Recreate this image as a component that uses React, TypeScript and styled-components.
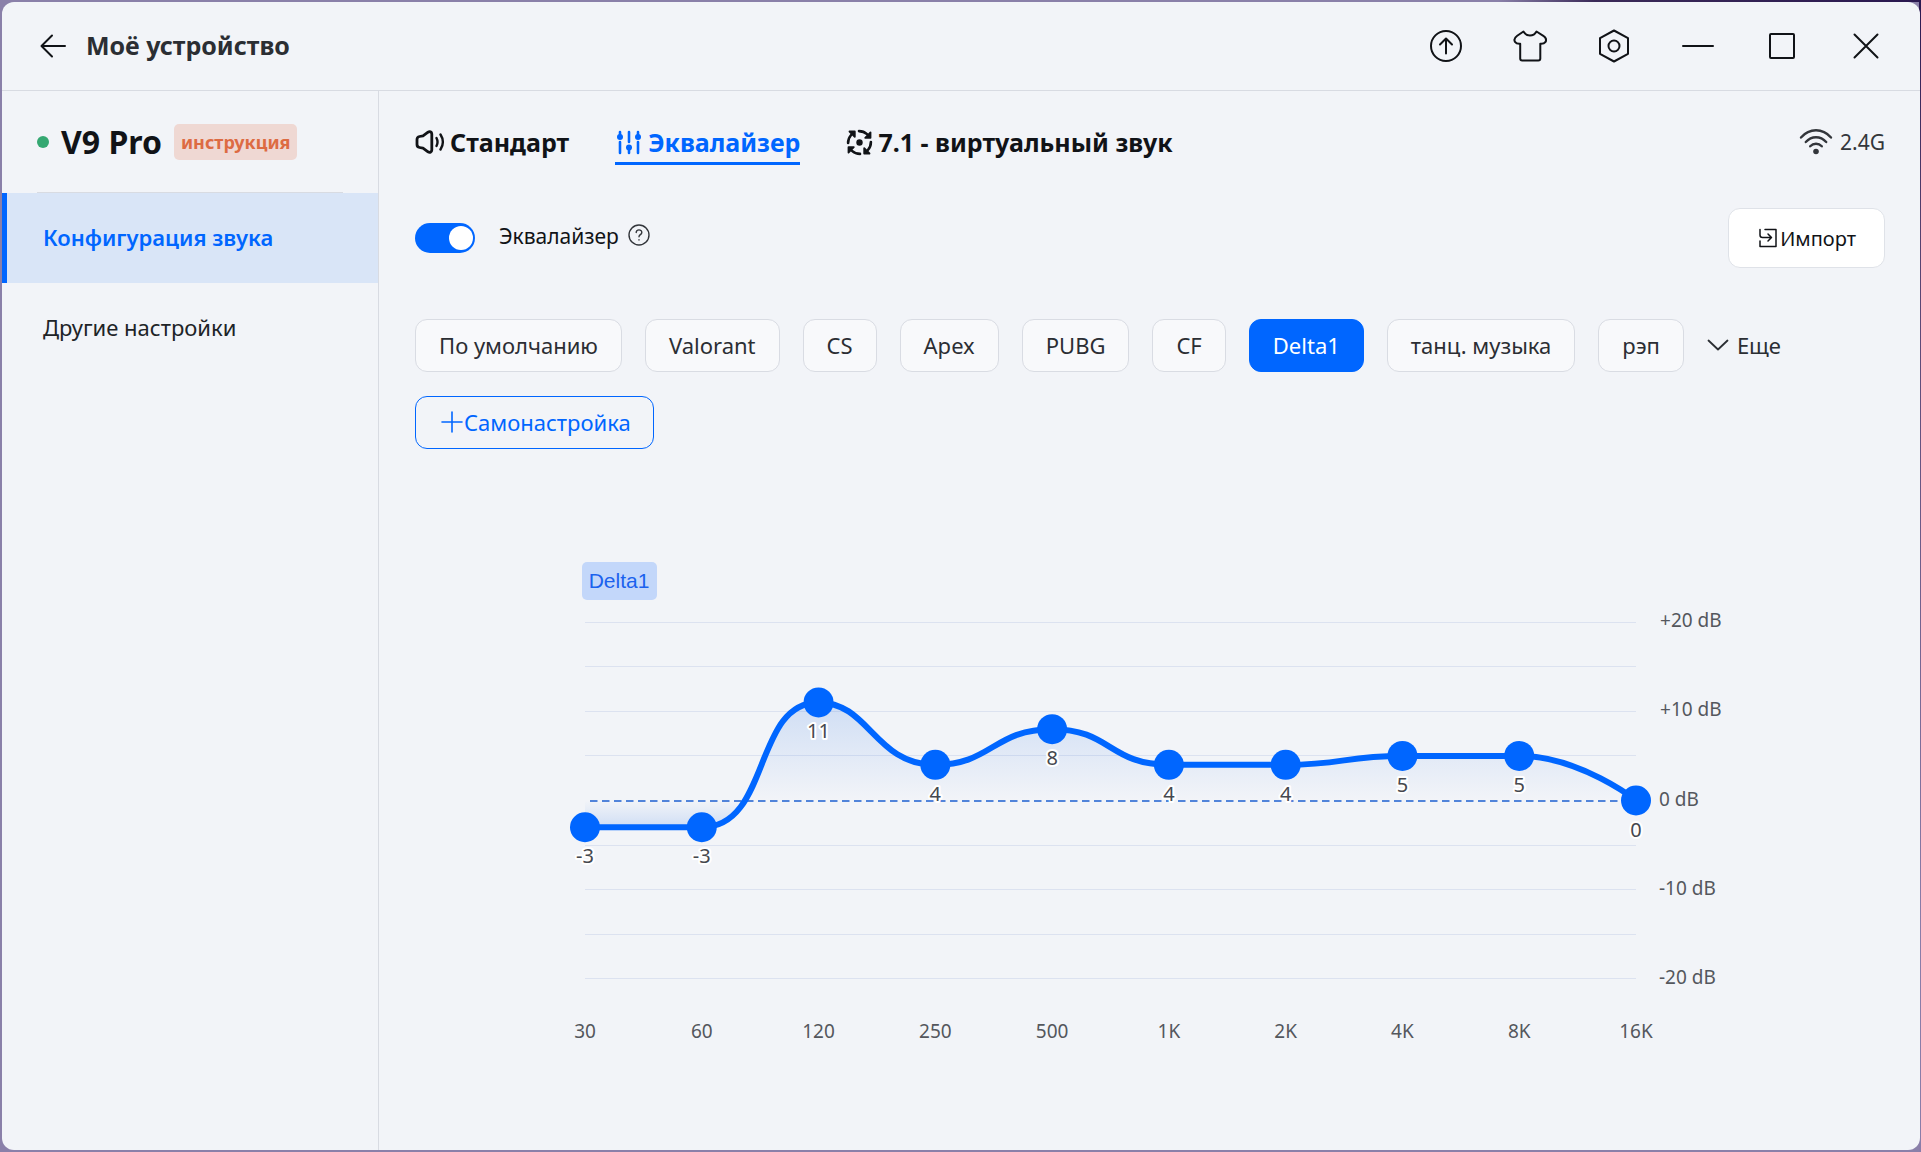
import React, { useState } from 'react';
import styled, { createGlobalStyle, css } from 'styled-components';

const blue = '#0066ff';
const ink = '#111317';
const line = '#d8dbe2';
const sans = '"Segoe UI", "Noto Sans", sans-serif';

const GlobalStyle = createGlobalStyle`
  * { box-sizing: border-box; }
  body {
    margin: 0;
    font-family: ${sans};
    color: ${ink};
    background:
      linear-gradient(90deg, transparent 78%, #3b2a58 83%, #2a1850 100%) top / 100% 2px no-repeat,
      linear-gradient(180deg, #2a1850 0%, #54406f 20%, #8a7da9 80%) right / 2px 100% no-repeat,
      #8a80a9;
  }
  button, input { font: inherit; color: inherit; }
  button { padding: 0; border: 0; background: none; cursor: pointer; }
  svg { display: block; flex: none; }
`;

const Frame = styled.div`
  padding: 2px 1px 2px 2px;
`;

const Window = styled.div`
  display: flex;
  flex-direction: column;
  min-height: calc(100vh - 4px);
  background: #f2f4f8;
  border-radius: 12px;
  overflow: hidden;
`;

const TitleBar = styled.header`
  display: flex;
  align-items: center;
  justify-content: space-between;
  height: 89px;
  padding: 0 36px;
  border-bottom: 1px solid ${line};
`;

const TitleGroup = styled.div`
  display: flex;
  align-items: center;
  gap: 18px;
`;

const Title = styled.h1`
  margin: 0;
  padding-bottom: 2px;
  font-size: 25px;
  font-weight: 700;
  line-height: 36px;
  color: #2b2e33;
`;

const WindowActions = styled.div`
  display: flex;
  gap: 48px;
`;

const IconButton = styled.button`
  display: grid;
  place-items: center;
  width: 36px;
  height: 36px;
`;

const BackButton = styled(IconButton)`
  width: 30px;
`;

const Body = styled.div`
  display: flex;
  flex: 1;
`;

const Sidebar = styled.aside`
  flex: none;
  width: 377px;
  border-right: 1px solid ${line};
`;

const Device = styled.div`
  display: flex;
  align-items: center;
  height: 102px;
  margin: 0 35px;
  border-bottom: 1px solid ${line};
`;

const StatusDot = styled.span`
  width: 12px;
  height: 12px;
  border-radius: 50%;
  background: #35a872;
`;

const DeviceName = styled.h2`
  margin: 0 12px;
  font-size: 32px;
  font-weight: 700;
  line-height: 36px;
`;

const ManualLink = styled.a`
  padding: 0 7px;
  font-size: 18px;
  font-weight: 700;
  line-height: 36px;
  color: #dd6b42;
  background: #efd8d3;
  border-radius: 5px;
  text-decoration: none;
`;

const NavItem = styled.button<{ $active?: boolean }>`
  display: block;
  width: 100%;
  height: 90px;
  padding: 0 0 2px 36px;
  border-left: 5px solid transparent;
  font-size: 22px;
  text-align: left;
  color: #202327;
  ${({ $active }) => $active && css`
    color: ${blue};
    font-weight: 600;
    background: #d9e5f7;
    border-left-color: ${blue};
  `}
`;

const Main = styled.main`
  flex: 1;
  min-width: 0;
  padding: 30px 35px 30px 36px;
`;

const SpreadRow = styled.div`
  display: flex;
  align-items: center;
  justify-content: space-between;
`;

const Tabs = styled.div`
  display: flex;
  gap: 46px;
`;

const Tab = styled.button<{ $active?: boolean }>`
  display: flex;
  align-items: center;
  gap: 5px;
  height: 44px;
  padding-bottom: 2px;
  border-top: 3px solid transparent;
  border-bottom: 3px solid ${({ $active }) => ($active ? blue : 'transparent')};
  font-size: 25px;
  font-weight: 700;
  color: ${({ $active }) => ($active ? blue : ink)};
`;

const Connection = styled.div`
  display: flex;
  align-items: center;
  gap: 7px;
  padding-bottom: 2px;
  font-size: 21px;
  color: #33363b;
`;

const EqualizerRow = styled(SpreadRow)`
  height: 60px;
  margin-top: 43px;
`;

const ToggleGroup = styled.div`
  display: flex;
  align-items: center;
  gap: 9px;
`;

const ToggleLabel = styled.label`
  display: flex;
  align-items: center;
  gap: 24px;
  font-size: 21px;
`;

const ToggleText = styled.span`
  padding-bottom: 4px;
`;

const HelpButton = styled.button`
  padding-bottom: 6px;
  color: #33363b;
`;

const Switch = styled.input`
  appearance: none;
  display: flex;
  align-items: center;
  width: 60px;
  height: 30px;
  margin: 0;
  padding: 0 2px;
  border-radius: 15px;
  background: #b9bec8;
  cursor: pointer;
  &::after {
    content: '';
    width: 24px;
    height: 24px;
    border-radius: 50%;
    background: #fff;
  }
  &:checked {
    justify-content: flex-end;
    background: ${blue};
  }
`;

const ImportButton = styled.button`
  display: flex;
  align-items: center;
  justify-content: center;
  gap: 3px;
  height: 60px;
  padding: 0 28px 0 30px;
  border: 1px solid #dfe2e8;
  border-radius: 12px;
  background: #fff;
  font-size: 20px;
`;

const Presets = styled.div`
  display: flex;
  flex-wrap: wrap;
  gap: 24px 23px;
  margin-top: 51px;
`;

const Chip = styled.button<{ $active?: boolean }>`
  height: 53px;
  padding: 0 23px 2px;
  border: 1px solid ${({ $active }) => ($active ? blue : '#d9dce3')};
  border-radius: 12px;
  font-size: 22px;
  color: ${({ $active }) => ($active ? '#fff' : '#2b2e33')};
  background: ${({ $active }) => ($active ? blue : '#f8f9fb')};
`;

const MoreButton = styled.button`
  display: flex;
  align-items: center;
  gap: 8px;
  padding-bottom: 2px;
  font-size: 22px;
  color: #2b2e33;
`;

const CustomButton = styled.button`
  display: flex;
  align-items: center;
  gap: 1px;
  height: 53px;
  padding: 0 22px 2px 25px;
  border: 1px solid ${blue};
  border-radius: 12px;
  font-size: 22px;
  color: ${blue};
`;

const ChartSvg = styled.svg`
  width: 100%;
  max-width: 1186px;
  height: auto;
  margin: 100px auto 0;
`;

const AxisText = styled.text`
  font: 19px ${sans};
  fill: #54575d;
`;

const ValueText = styled.text`
  font: 20px ${sans};
  fill: #45484e;
  stroke: #fff;
  stroke-width: 4px;
  stroke-linejoin: round;
  paint-order: stroke;
`;

const LegendText = styled.text`
  font: 21px "Liberation Sans", Arial, sans-serif;
  fill: #1b62ee;
`;

const Stroke = ({ w, h, sw = 2, children }: { w: number; h: number; sw?: number; children: React.ReactNode }) => (
  <svg width={w} height={h} viewBox={`0 0 ${w} ${h}`} fill="none" stroke="currentColor" strokeWidth={sw} strokeLinecap="round" strokeLinejoin="round" aria-hidden="true">
    {children}
  </svg>
);

const BackIcon = () => (
  <Stroke w={26} h={24}><path d="M12 1.5 1.5 12 12 22.5M1.5 12H25" /></Stroke>
);
const UploadIcon = () => (
  <Stroke w={32} h={32}><circle cx="16" cy="16" r="15" /><path d="M16 23.5V9M10 14.5 16 8.5l6 6" /></Stroke>
);
const ShirtIcon = () => (
  <Stroke w={34} h={32}>
    <path d="M10.500 1.500c1.500 2.600 3.500 4 6.500 4s5-1.400 6.500-4l6.800 4.300c2.700 1.900 3.400 4.300 2 6.300-1 1.400-2.600 1.800-5 1.600V28.500c0 1.300-.7 2-2 2H9.200c-1.300 0-2-.7-2-2V13.700c-2.400.2-4-.2-5-1.600-1.400-2-.7-4.400 2-6.300z" />
  </Stroke>
);
const HexIcon = () => (
  <Stroke w={30} h={34}><path d="M15 1.500 29 9.200v15.600L15 32.500 1 24.800V9.200z" /><circle cx="15" cy="17" r="5.500" /></Stroke>
);
const MinimizeIcon = () => <Stroke w={32} h={4}><path d="M1 2h30" /></Stroke>;
const MaximizeIcon = () => <Stroke w={28} h={28} sw={2}><rect x="2" y="2" width="24" height="24" rx="1" /></Stroke>;
const CloseIcon = () => <Stroke w={26} h={26}><path d="m1.500 1.500 23 23m0-23-23 23" /></Stroke>;

const SpeakerIcon = () => (
  <Stroke w={30} h={24} sw={2.800}>
    <path d="M2 9.500C2 7.800 3 6.800 4.500 6.500L8 5.800l5-3.600c1.700-1.100 3.800-.3 3.800 1.800v16c0 2.100-2.100 2.900-3.800 1.800l-5-3.600-3.500-.7C3 17.200 2 16.200 2 14.500z" />
    <path d="M21.500 8c1.300 2.500 1.300 5.500 0 8M25.500 4.500c3 4.700 3 10.300 0 15" strokeWidth="2.400" />
  </Stroke>
);
const SlidersIcon = () => (
  <Stroke w={28} h={26} sw={2.600}>
    <path d="M5 3v4M5 13v11M14 3v10M14 18v6M23 3v4M23 13v11" />
    <g fill="currentColor" stroke="none"><circle cx="5" cy="8" r="3" /><circle cx="14" cy="18.500" r="3" /><circle cx="23" cy="8" r="3" /></g>
  </Stroke>
);
const SurroundIcon = () => (
  <Stroke w={27} h={27} sw={2.600}>
    <circle cx="13.500" cy="13.500" r="3.200" fill="currentColor" stroke="none" />
    {[0, 90, 180, 270].map((angle) => (
      <g key={angle} transform={`rotate(${angle} 13.500 13.500)`}>
        <path d="M13 2.100c3.200 0 5.800 1 8 3" />
        <path d="M24.500 3.500v5.300h-5.300z" fill="currentColor" strokeWidth="1.800" />
      </g>
    ))}
  </Stroke>
);
const WifiIcon = () => (
  <Stroke w={34} h={28} sw={2.400}>
    <path d="M2 9.500C10.500-.1 23.500-.1 32 9.500M6.800 14c5.800-6.400 14.600-6.400 20.400 0M11.200 18.300c3.300-3.500 8.300-3.500 11.600 0" />
    <circle cx="17" cy="23.500" r="2.800" fill="currentColor" stroke="none" />
  </Stroke>
);
const HelpIcon = () => (
  <Stroke w={22} h={22} sw={1.400}>
    <circle cx="11" cy="11" r="10" />
    <path d="M8.200 8.500c0-3.600 5.600-3.500 5.600-.1 0 2.200-2.800 2.300-2.800 4.400M11 15.800v.3" />
  </Stroke>
);
const ImportIcon = () => (
  <Stroke w={18} h={20} sw={1.500}>
    <path d="M6 1.500h11v17H1V13M1 1.500V7c0 1.700.8 2.500 2.500 2.500H12M9 6l3.500 3.500L9 13" />
  </Stroke>
);
const ChevronIcon = () => <Stroke w={22} h={12} sw={1.800}><path d="m1.500 1.500 9.500 9 9.500-9" /></Stroke>;
const PlusIcon = () => <Stroke w={22} h={22} sw={1.600}><path d="M11 1v20M1 11h20" /></Stroke>;

const presetNames = ['По умолчанию', 'Valorant', 'CS', 'Apex', 'PUBG', 'CF', 'Delta1', 'танц. музыка', 'рэп'];

const bands = [
  { label: '30', gain: -3 },
  { label: '60', gain: -3 },
  { label: '120', gain: 11 },
  { label: '250', gain: 4 },
  { label: '500', gain: 8 },
  { label: '1K', gain: 4 },
  { label: '2K', gain: 4 },
  { label: '4K', gain: 5 },
  { label: '8K', gain: 5 },
  { label: '16K', gain: 0 },
];

const plot = { left: 28, right: 1079, zero: 251.5, perDb: 8.92 };
const xOf = (i: number) => plot.left + ((plot.right - plot.left) * i) / (bands.length - 1);
const yOf = (gain: number) => plot.zero - gain * plot.perDb;
const clamp = (v: number, a: number, b: number) => Math.max(Math.min(a, b), Math.min(Math.max(a, b), v));

type Point = { x: number; y: number };

// Cubic segments whose control points never leave the span of their two end points.
function smoothPath(pts: Point[], smooth: number) {
  let d = `M${pts[0].x} ${pts[0].y}`;
  let out = pts[0];
  for (let i = 1; i < pts.length; i++) {
    const prev = pts[i - 1];
    const cur = pts[i];
    const next = pts[i + 1];
    let inn = cur;
    let nextOut = cur;
    if (next) {
      const lenPrev = Math.hypot(cur.x - prev.x, cur.y - prev.y);
      const lenNext = Math.hypot(next.x - cur.x, next.y - cur.y);
      const ratio = lenNext / (lenNext + lenPrev);
      const axis = (k: 'x' | 'y') => {
        const v = next[k] - prev[k];
        const o = clamp(cur[k] + v * smooth * ratio, cur[k], next[k]);
        const n = clamp(cur[k] - ((o - cur[k]) * lenPrev) / lenNext, prev[k], cur[k]);
        return [n, cur[k] + ((cur[k] - n) * lenNext) / lenPrev];
      };
      const [ix, ox] = axis('x');
      const [iy, oy] = axis('y');
      inn = { x: ix, y: iy };
      nextOut = { x: ox, y: oy };
    }
    d += `C${out.x} ${out.y} ${inn.x} ${inn.y} ${cur.x} ${cur.y}`;
    out = nextOut;
  }
  return d;
}

const points = bands.map((b, i) => ({ x: xOf(i), y: yOf(b.gain) }));
const curve = smoothPath(points, 0.5);
const zeroStop = (plot.zero - yOf(11)) / (yOf(-3) - yOf(11));

function EqualizerChart({ name }: { name: string }) {
  return (
    <ChartSvg viewBox="0 0 1186 520" role="img" aria-label={`Эквалайзер: ${name}`}>
      <defs>
        <linearGradient id="area" x1="0" y1={yOf(11)} x2="0" y2={yOf(-3)} gradientUnits="userSpaceOnUse">
          <stop offset="0" stopColor="#0a5fe0" stopOpacity="0.15" />
          <stop offset={zeroStop} stopColor="#0a5fe0" stopOpacity="0" />
          <stop offset="1" stopColor="#0a5fe0" stopOpacity="0.15" />
        </linearGradient>
      </defs>
      <rect x="25" y="13" width="75" height="38" rx="5" fill="#c3d7fa" />
      <LegendText x="62" y="39" textAnchor="middle">{name}</LegendText>
      {[20, 15, 10, 5, -5, -10, -15, -20].map((gain) => (
        <line key={gain} x1={plot.left} x2={plot.right} y1={Math.floor(yOf(gain)) + 0.5} y2={Math.floor(yOf(gain)) + 0.5} stroke="#dce2f0" />
      ))}
      {[20, 10, 0, -10, -20].map((gain) => (
        <AxisText key={gain} x={gain > 0 ? 1103 : 1102} y={yOf(gain) + 5}>
          {gain > 0 ? '+' : ''}{gain} dB
        </AxisText>
      ))}
      <path d={`${curve}L${plot.right} ${plot.zero}L${plot.left} ${plot.zero}Z`} fill="url(#area)" />
      <line x1={plot.left + 5} x2={plot.right} y1={plot.zero + 0.5} y2={plot.zero + 0.5} stroke="#1c5fcf" strokeWidth="1.600" strokeDasharray="7.500 4.500" />
      <path d={curve} fill="none" stroke={blue} strokeWidth="6" />
      {points.map((p, i) => (
        <g key={bands[i].label}>
          <circle cx={p.x} cy={p.y} r="15" fill={blue} />
          <ValueText x={p.x} y={p.y + 36} textAnchor="middle">{bands[i].gain}</ValueText>
          <AxisText x={p.x} y="489" textAnchor="middle">{bands[i].label}</AxisText>
        </g>
      ))}
    </ChartSvg>
  );
}

export default function App() {
  const [enabled, setEnabled] = useState(true);
  const [preset, setPreset] = useState('Delta1');

  return (
    <Frame>
      <GlobalStyle />
      <Window>
        <TitleBar>
          <TitleGroup>
            <BackButton aria-label="Назад"><BackIcon /></BackButton>
            <Title>Моё устройство</Title>
          </TitleGroup>
          <WindowActions>
            <IconButton aria-label="Обновление"><UploadIcon /></IconButton>
            <IconButton aria-label="Тема"><ShirtIcon /></IconButton>
            <IconButton aria-label="Настройки"><HexIcon /></IconButton>
            <IconButton aria-label="Свернуть"><MinimizeIcon /></IconButton>
            <IconButton aria-label="Развернуть"><MaximizeIcon /></IconButton>
            <IconButton aria-label="Закрыть"><CloseIcon /></IconButton>
          </WindowActions>
        </TitleBar>
        <Body>
          <Sidebar>
            <Device>
              <StatusDot />
              <DeviceName>V9 Pro</DeviceName>
              <ManualLink href="#manual">инструкция</ManualLink>
            </Device>
            <nav>
              <NavItem $active>Конфигурация звука</NavItem>
              <NavItem>Другие настройки</NavItem>
            </nav>
          </Sidebar>
          <Main>
            <SpreadRow>
              <Tabs>
                <Tab><SpeakerIcon />Стандарт</Tab>
                <Tab $active><SlidersIcon />Эквалайзер</Tab>
                <Tab><SurroundIcon />7.1 - виртуальный звук</Tab>
              </Tabs>
              <Connection><WifiIcon />2.4G</Connection>
            </SpreadRow>
            <EqualizerRow>
              <ToggleGroup>
                <ToggleLabel>
                  <Switch type="checkbox" checked={enabled} onChange={(e) => setEnabled(e.target.checked)} />
                  <ToggleText>Эквалайзер</ToggleText>
                </ToggleLabel>
                <HelpButton aria-label="Справка"><HelpIcon /></HelpButton>
              </ToggleGroup>
              <ImportButton><ImportIcon />Импорт</ImportButton>
            </EqualizerRow>
            <Presets>
              {presetNames.map((name) => (
                <Chip key={name} $active={name === preset} onClick={() => setPreset(name)}>{name}</Chip>
              ))}
              <MoreButton><ChevronIcon />Еще</MoreButton>
              <CustomButton><PlusIcon />Самонастройка</CustomButton>
            </Presets>
            <EqualizerChart name={preset} />
          </Main>
        </Body>
      </Window>
    </Frame>
  );
}
